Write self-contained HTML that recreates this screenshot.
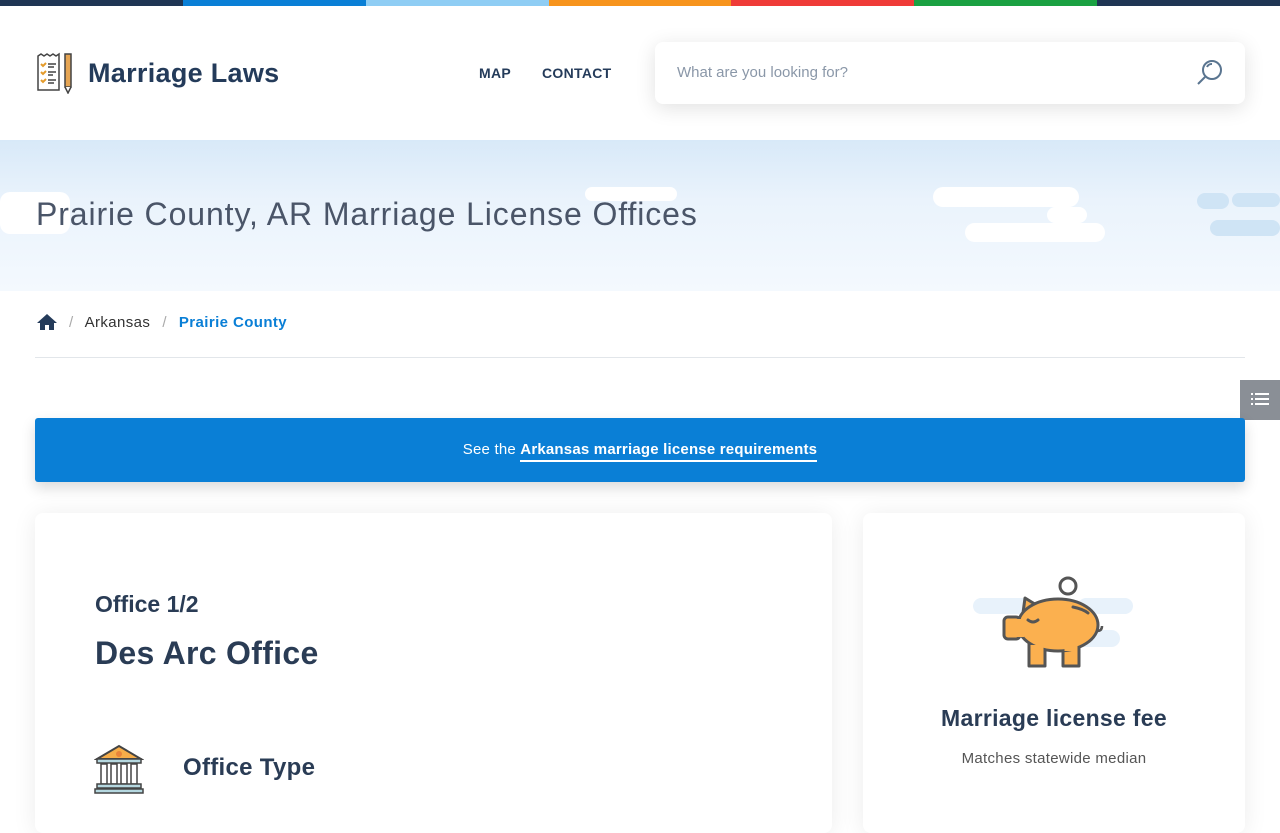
<!DOCTYPE html>
<html><head><meta charset="utf-8"><style>
*{box-sizing:border-box;margin:0;padding:0}
body{width:1280px;height:800px;overflow:hidden;font-family:"Liberation Sans",sans-serif;background:#fff;color:#2a3c55;position:relative}
.bar{position:absolute;top:0;left:0;width:1280px;height:6px;display:flex}
.bar div{flex:1}
header{position:absolute;top:6px;left:0;width:1280px;height:134px;background:#fff}
.logo{position:absolute;left:36px;top:46px;display:flex;align-items:center}
.logo span{font-weight:bold;font-size:27px;color:#243b5a;margin-left:14px;letter-spacing:0.3px}
.nav{position:absolute;top:59px;font-size:14px;font-weight:bold;color:#243b5a;letter-spacing:0.3px}
.search{position:absolute;left:655px;top:36px;width:590px;height:62px;background:#fff;border-radius:8px;box-shadow:0 4px 20px rgba(0,0,0,.12)}
.search span{position:absolute;left:22px;top:22px;font-size:15px;color:#8a97a8}
.hero{position:absolute;top:140px;left:0;width:1280px;height:151px;background:linear-gradient(#d8e9f8,#eaf3fc 40%,#f4f9fe)}
.hero h1{position:absolute;left:36px;top:56px;font-size:32px;font-weight:normal;color:#4a5568;letter-spacing:0.9px}
.cl{position:absolute;background:#fff;border-radius:10px}
.cb{position:absolute;background:#cfe4f5;border-radius:10px}
.bc{position:absolute;top:313px;left:36px;font-size:15px;color:#333;display:flex;align-items:center;letter-spacing:0.4px}
.hr{position:absolute;top:357px;left:35px;width:1210px;height:1px;background:#e2e6ea}
.toc{position:absolute;left:1240px;top:380px;width:40px;height:40px;background:#8a8f96}
.banner{position:absolute;left:35px;top:418px;width:1210px;height:64px;background:#0a7fd6;border-radius:3px;box-shadow:0 6px 14px rgba(0,0,0,.15);color:#fff;font-size:15px;text-align:center;padding-top:23px;letter-spacing:0.2px}
.banner b{border-bottom:2px solid #fff;padding-bottom:2px}
.card{position:absolute;background:#fff;border-radius:8px;box-shadow:0 2px 24px rgba(0,0,0,.08)}
</style></head><body>
<div class="bar"><div style="background:#1f3554"></div><div style="background:#0a7fd6"></div><div style="background:#8fcdf4"></div><div style="background:#f7941d"></div><div style="background:#ef3b38"></div><div style="background:#1aa142"></div><div style="background:#1f3554"></div></div>
<header>
<div class="logo"><svg width="38" height="42" viewBox="0 0 38 42"><path d="M2 4l3-2 3 2 3-2 3 2 3-2 3 2 3-2v36H2z" fill="#fff" stroke="#444" stroke-width="1.5"/><g stroke="#e49b2b" stroke-width="2" fill="none"><path d="M5 12l2 2 3-3M5 20l2 2 3-3M5 28l2 2 3-3"/></g><g stroke="#444" stroke-width="1.5"><path d="M12 12h8M12 15h6M12 20h8M12 23h5M12 28h8M12 31h6"/></g><rect x="29" y="2" width="6" height="33" fill="#e6a553" stroke="#444" stroke-width="1.5"/><path d="M29 35l3 6 3-6" fill="#fff" stroke="#444" stroke-width="1.5"/></svg><span>Marriage Laws</span></div>
<div class="nav" style="left:479px">MAP</div><div class="nav" style="left:542px">CONTACT</div>
<div class="search"><span>What are you looking for?</span><svg style="position:absolute;left:540px;top:16px" width="30" height="30" viewBox="0 0 30 30" fill="none" stroke="#5a7590" stroke-width="2"><circle cx="17" cy="12" r="9"/><path d="M10 19l-7 7"/><path d="M12 9a5 5 0 0 1 5-3"/></svg></div>
</header>
<div class="hero">
<div class="cl" style="left:0;top:52px;width:70px;height:42px"></div>
<div class="cl" style="left:585px;top:47px;width:92px;height:14px"></div>
<div class="cl" style="left:933px;top:47px;width:146px;height:20px"></div>
<div class="cl" style="left:965px;top:83px;width:140px;height:19px"></div>
<div class="cl" style="left:1047px;top:67px;width:40px;height:16px"></div>
<div class="cb" style="left:1197px;top:53px;width:32px;height:16px"></div>
<div class="cb" style="left:1232px;top:53px;width:48px;height:14px"></div>
<div class="cb" style="left:1210px;top:80px;width:70px;height:16px"></div>
<h1>Prairie County, AR Marriage License Offices</h1>
</div>
<div class="bc"><svg width="22" height="18" viewBox="0 0 22 18"><path d="M11 1L1 10h3v7h5v-5h4v5h5v-7h3z" fill="#243b5a"/></svg><span style="color:#aaa;margin:0 11px 0 11px">/</span>Arkansas<span style="color:#aaa;margin:0 12px">/</span><b style="color:#0a7fd6">Prairie County</b></div>
<div class="hr"></div>
<div class="toc"><svg style="margin:12px 0 0 11px" width="18" height="14" viewBox="0 0 18 14" fill="#fff"><rect x="0" y="1" width="2" height="2"/><rect x="4" y="1" width="14" height="2"/><rect x="0" y="6" width="2" height="2"/><rect x="4" y="6" width="14" height="2"/><rect x="0" y="11" width="2" height="2"/><rect x="4" y="11" width="14" height="2"/></svg></div>
<div class="banner">See the <b>Arkansas marriage license requirements</b></div>
<div class="card" style="left:35px;top:513px;width:797px;height:320px">
<div style="position:absolute;left:60px;top:78px;font-size:23px;font-weight:bold;color:#2a3c55">Office 1/2</div>
<div style="position:absolute;left:60px;top:122px;font-size:32px;font-weight:bold;color:#2a3c55;letter-spacing:0.3px">Des Arc Office</div>
<svg style="position:absolute;left:59px;top:231px" width="50" height="52" viewBox="0 0 50 52"><path d="M3 15L25 2l22 13z" fill="#f6ad49" stroke="#444" stroke-width="2"/><circle cx="25" cy="10" r="3" fill="#e8833a"/><rect x="3" y="15" width="44" height="4" fill="#b5d8e0" stroke="#444" stroke-width="1.5"/><g fill="#fff" stroke="#444" stroke-width="1.5"><rect x="7" y="20" width="6" height="20"/><rect x="17" y="20" width="6" height="20"/><rect x="27" y="20" width="6" height="20"/><rect x="37" y="20" width="6" height="20"/></g><rect x="3" y="40" width="44" height="4" fill="#b5d8e0" stroke="#444" stroke-width="1.5"/><rect x="1" y="45" width="48" height="4" fill="#b5d8e0" stroke="#444" stroke-width="1.5"/></svg>
<div style="position:absolute;left:148px;top:241px;font-size:24px;font-weight:bold;color:#2a3c55;letter-spacing:0.3px">Office Type</div>
</div>
<div class="card" style="left:863px;top:513px;width:382px;height:320px">
<div class="cb" style="left:110px;top:85px;width:60px;height:16px;background:#e8f2fb"></div>
<div class="cb" style="left:215px;top:85px;width:55px;height:16px;background:#e8f2fb"></div>
<div class="cb" style="left:195px;top:117px;width:62px;height:17px;background:#e8f2fb"></div>
<svg style="position:absolute;left:138px;top:62px" width="105" height="96" viewBox="0 0 105 96">
<circle cx="67" cy="11" r="8" fill="#fff" stroke="#555" stroke-width="3"/>
<g fill="#fbb04f" stroke="#555" stroke-width="3" stroke-linejoin="round">
<rect x="28" y="62" width="16" height="29"/>
<rect x="62" y="62" width="16" height="29"/>
<path d="M22 38L24 23L37 31z"/>
<ellipse cx="57" cy="50" rx="40" ry="26"/>
<rect x="3" y="42" width="16" height="22" rx="4"/>
</g>
<rect x="15" y="44" width="8" height="18" fill="#fbb04f"/>
<rect x="29.5" y="70" width="13" height="6" fill="#fbb04f"/>
<rect x="63.5" y="70" width="13" height="6" fill="#fbb04f"/>
<path d="M72 32q10 2 15 6" stroke="#555" stroke-width="3" fill="none" stroke-linecap="round"/>
<path d="M27 45q5 4 10 0" stroke="#555" stroke-width="3" fill="none" stroke-linecap="round"/>
<path d="M96 56q5 0 5-5" stroke="#555" stroke-width="2.5" fill="none"/>
</svg>
<div style="position:absolute;left:0;width:382px;text-align:center;top:192px;font-size:23px;font-weight:bold;color:#2a3c55;letter-spacing:0.3px">Marriage license fee</div>
<div style="position:absolute;left:0;width:382px;text-align:center;top:237px;font-size:15px;color:#555;letter-spacing:0.3px">Matches statewide median</div>
</div>
</body></html>
